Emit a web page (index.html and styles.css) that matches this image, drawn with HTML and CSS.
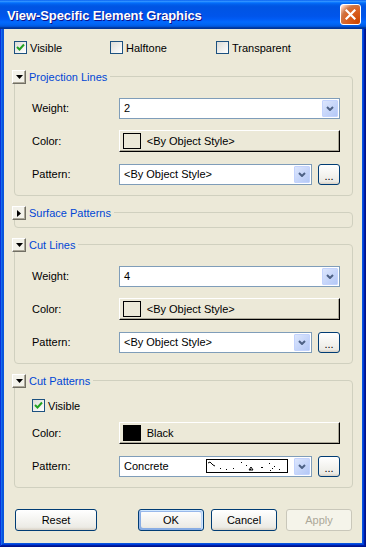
FILE: index.html
```html
<!DOCTYPE html>
<html lang="en">
<head>
  <meta charset="UTF-8" />
  <title>View-Specific Element Graphics</title>
  <link rel="stylesheet" href="styles.css">
</head>
<body>
  <div class="window">
    <div class="title-bar">
      <div class="title">View-Specific Element Graphics</div>
      <button class="close" aria-label="Close">
        <svg width="11" height="11" viewBox="0 0 11 11"><path d="M1.5 1.5 L9.5 9.5 M9.5 1.5 L1.5 9.5" stroke="#fff" stroke-width="2.2" stroke-linecap="square"/></svg>
      </button>
    </div>

    <div class="client">
      <div class="top-checks">
        <label class="check first"><span class="box"><svg width="9" height="9" viewBox="0 0 9 9"><path d="M1 4 L3.5 6.5 L8 1.5" fill="none" stroke="#21A121" stroke-width="2"/></svg></span>Visible</label>
        <label class="check second"><span class="box"></span>Halftone</label>
        <label class="check"><span class="box"></span>Transparent</label>
      </div>

      <!-- Projection Lines -->
      <div class="group">
        <div class="group-head">
          <span class="expander"><svg width="7" height="4" viewBox="0 0 7 4"><polygon points="0,0 7,0 3.5,4" fill="#000"/></svg></span>
          <span class="group-title">Projection Lines</span>
        </div>
        <div class="group-body">
          <div class="row">
            <span class="row-label">Weight:</span>
            <div class="combo"><span class="combo-text">2</span><span class="drop"><svg width="8" height="5" viewBox="0 0 8 5"><polyline points="1,1 4,4 7,1" fill="none" stroke="#4D6185" stroke-width="2"/></svg></span></div>
          </div>
          <div class="row">
            <span class="row-label">Color:</span>
            <div class="color-btn"><span class="swatch"></span>&lt;By Object Style&gt;</div>
          </div>
          <div class="row">
            <span class="row-label">Pattern:</span>
            <div class="combo short"><span class="combo-text">&lt;By Object Style&gt;</span><span class="drop"><svg width="8" height="5" viewBox="0 0 8 5"><polyline points="1,1 4,4 7,1" fill="none" stroke="#4D6185" stroke-width="2"/></svg></span></div>
            <button class="btn dots">...</button>
          </div>
        </div>
      </div>

      <!-- Surface Patterns -->
      <div class="group">
        <div class="group-head">
          <span class="expander"><svg width="4" height="7" viewBox="0 0 4 7"><polygon points="0,0 4,3.5 0,7" fill="#000"/></svg></span>
          <span class="group-title">Surface Patterns</span>
        </div>
        <div class="group-body empty"></div>
      </div>

      <!-- Cut Lines -->
      <div class="group">
        <div class="group-head">
          <span class="expander"><svg width="7" height="4" viewBox="0 0 7 4"><polygon points="0,0 7,0 3.5,4" fill="#000"/></svg></span>
          <span class="group-title">Cut Lines</span>
        </div>
        <div class="group-body">
          <div class="row">
            <span class="row-label">Weight:</span>
            <div class="combo"><span class="combo-text">4</span><span class="drop"><svg width="8" height="5" viewBox="0 0 8 5"><polyline points="1,1 4,4 7,1" fill="none" stroke="#4D6185" stroke-width="2"/></svg></span></div>
          </div>
          <div class="row">
            <span class="row-label">Color:</span>
            <div class="color-btn"><span class="swatch"></span>&lt;By Object Style&gt;</div>
          </div>
          <div class="row">
            <span class="row-label">Pattern:</span>
            <div class="combo short"><span class="combo-text">&lt;By Object Style&gt;</span><span class="drop"><svg width="8" height="5" viewBox="0 0 8 5"><polyline points="1,1 4,4 7,1" fill="none" stroke="#4D6185" stroke-width="2"/></svg></span></div>
            <button class="btn dots">...</button>
          </div>
        </div>
      </div>

      <!-- Cut Patterns -->
      <div class="group">
        <div class="group-head">
          <span class="expander"><svg width="7" height="4" viewBox="0 0 7 4"><polygon points="0,0 7,0 3.5,4" fill="#000"/></svg></span>
          <span class="group-title">Cut Patterns</span>
        </div>
        <div class="group-body patterns">
          <label class="check inner"><span class="box"><svg width="9" height="9" viewBox="0 0 9 9"><path d="M1 4 L3.5 6.5 L8 1.5" fill="none" stroke="#21A121" stroke-width="2"/></svg></span>Visible</label>
          <div class="row">
            <span class="row-label">Color:</span>
            <div class="color-btn"><span class="swatch black"></span>Black</div>
          </div>
          <div class="row">
            <span class="row-label">Pattern:</span>
            <div class="combo short">
              <span class="combo-text">Concrete</span>
              <svg class="preview" width="82" height="14" viewBox="0 0 82 14">
                <rect x="0.5" y="0.5" width="81" height="13" fill="#fff" stroke="#000"/>
                <path d="M2 4 L4 3 L7 6 L9 7" fill="none" stroke="#000" stroke-width="1"/>
                <rect x="14" y="9" width="1" height="1"/><rect x="20" y="10" width="1" height="1"/>
                <rect x="27" y="9" width="1" height="1"/><rect x="40" y="6" width="1" height="1"/>
                <rect x="44" y="10" width="1" height="1"/><rect x="55" y="8" width="2" height="1"/>
                <path d="M43 11 L45 8 L47 11 Z" fill="none" stroke="#000" stroke-width="1"/>
                <rect x="63" y="4" width="1" height="1"/><rect x="66" y="9" width="1" height="1"/>
                <rect x="64" y="11" width="1" height="1"/><rect x="68" y="7" width="1" height="1"/>
                <rect x="73" y="10" width="1" height="1"/><rect x="35" y="3" width="1" height="1"/>
              </svg>
              <span class="drop"><svg width="8" height="5" viewBox="0 0 8 5"><polyline points="1,1 4,4 7,1" fill="none" stroke="#4D6185" stroke-width="2"/></svg></span>
            </div>
            <button class="btn dots">...</button>
          </div>
        </div>
      </div>

      <div class="actions">
        <button class="btn reset">Reset</button>
        <button class="btn default ok">OK</button>
        <button class="btn cancel">Cancel</button>
        <button class="btn apply" disabled>Apply</button>
      </div>
    </div>
  </div>
</body>
</html>
```

FILE: styles.css
```css
* { box-sizing: border-box; }

body {
  margin: 0;
  font-family: "Liberation Sans", Arial, sans-serif;
  font-size: 11px;
  color: #000;
  background: #fff;
}

.window {
  width: 366px;
  height: 547px;
  display: flex;
  flex-direction: column;
  background: #0855DD;
  box-shadow: inset -1px -1px #00138C, inset 1px 1px #0831D9,
              inset -2px -2px #001EA0, inset 2px 2px #166AEE,
              inset -3px -3px #003BDA, inset 3px 3px #0855DD;
}

.title-bar {
  height: 29px;
  display: flex;
  align-items: center;
  justify-content: space-between;
  padding: 1px 5px 0 7px;
  background: linear-gradient(180deg, #0058EE 0%, #3593FF 4%, #288EFF 6%, #127DFF 8%, #036FFC 10%,
    #0262EE 14%, #0057E5 20%, #0054E3 24%, #0055EB 56%, #005BF5 66%, #026AFE 76%,
    #0062EF 86%, #0052D6 92%, #0040AB 94%, #003092 100%);
}

.title {
  color: #fff;
  font-weight: bold;
  font-size: 13px;
  letter-spacing: -0.1px;
  text-shadow: 1px 1px #0F1089;
}

.close {
  width: 21px;
  height: 21px;
  padding: 0;
  margin-top: -1px;
  border: 1px solid #fff;
  border-radius: 3px;
  display: grid;
  place-items: center;
  background: radial-gradient(circle at 90% 90%, #CC4600 0, #DC6527 55%, #CD7546 70%, #FFCCB2 90%, #fff 100%);
}

.client {
  flex: 1;
  margin: 0 4px 4px;
  background: #ECE9D8;
  padding: 12px 9px 11px 8px;
  display: flex;
  flex-direction: column;
}

/* checkboxes */
.top-checks {
  display: flex;
  margin-left: 2px;
  height: 13px;
}

.check {
  display: flex;
  align-items: center;
  gap: 3px;
  height: 13px;
}

.check.first { width: 96px; }
.check.second { width: 106px; }

.box {
  width: 13px;
  height: 13px;
  border: 1px solid #1C5180;
  background: linear-gradient(135deg, #DCDCD7, #fff);
  display: grid;
  place-items: center;
}

/* groups */
.group { margin-top: 10px; }
.top-checks + .group { margin-top: 16px; }

.group-head {
  position: relative;
  z-index: 1;
  display: flex;
  align-items: center;
  gap: 3px;
  width: max-content;
  height: 14px;
  padding-right: 3px;
  background: #ECE9D8;
}

.expander {
  width: 14px;
  height: 14px;
  display: grid;
  place-items: center;
  border: 1px solid;
  border-color: #fff #716F64 #716F64 #fff;
  box-shadow: inset -1px -1px #ACA899;
  background: #F3F2EA;
}

.group-title {
  color: #0046D5;
}

.group-body {
  margin: -8px 0 0 2px;
  border: 1px solid #D0D0BF;
  border-radius: 4px;
  padding: 20px 12px 10px 17px;
  display: flex;
  flex-direction: column;
  gap: 11px;
}

.group-body.empty {
  height: 16px;
  padding: 0;
}

.group-body.patterns {
  padding-top: 18px;
}

.check.inner { margin-bottom: -1px; }

.row {
  display: flex;
  align-items: center;
  height: 22px;
}

.row-label { width: 87px; }

/* combo boxes */
.combo {
  width: 221px;
  height: 21px;
  display: flex;
  align-items: center;
  padding: 1px;
  border: 1px solid #7F9DB9;
  background: #fff;
}

.combo.short { width: 193px; }

.combo-text {
  flex: 1;
  padding-left: 3px;
}

.preview { margin-right: 6px; }

.drop {
  width: 16px;
  height: 17px;
  display: grid;
  place-items: center;
  border: 1px solid #C3D3FD;
  border-radius: 1px;
  background: linear-gradient(135deg, #DCE6FD, #B4C8F6);
}

/* colour buttons */
.color-btn {
  width: 222px;
  height: 22px;
  display: flex;
  align-items: center;
  gap: 6px;
  padding-left: 3px;
  border: 1px solid;
  border-color: #fff #000 #000 #fff;
  box-shadow: inset -1px -1px #ACA899;
  background: #ECE9D8;
}

.swatch {
  width: 18px;
  height: 16px;
  border: 1px solid #000;
}

.swatch.black { background: #000; }

/* push buttons */
.btn {
  font-family: inherit;
  font-size: 11px;
  color: #000;
  height: 22px;
  padding: 0;
  border: 1px solid #003C74;
  border-radius: 3px;
  background: linear-gradient(180deg, #fff, #ECEBE5 86%, #D8D0C4);
}

.btn.dots {
  width: 22px;
  height: 21px;
  margin-left: 6px;
  padding-top: 3px;
}

.btn.default {
  box-shadow: inset -1px 1px #CEE7FF, inset 1px 2px #98B8EA, inset -2px 2px #BCD4F6,
              inset 1px -1px #89ADE4, inset 2px -2px #89ADE4;
}

.btn:disabled {
  color: #ACA899;
  border-color: #C9C7BA;
  background: #F5F4EA;
}

.actions {
  display: flex;
  margin: 21px 0 0 3px;
}

.reset { width: 82px; }
.ok { width: 66px; margin-left: 41px; }
.cancel { width: 66px; margin-left: 7px; }
.apply { width: 66px; margin-left: 9px; }
```
